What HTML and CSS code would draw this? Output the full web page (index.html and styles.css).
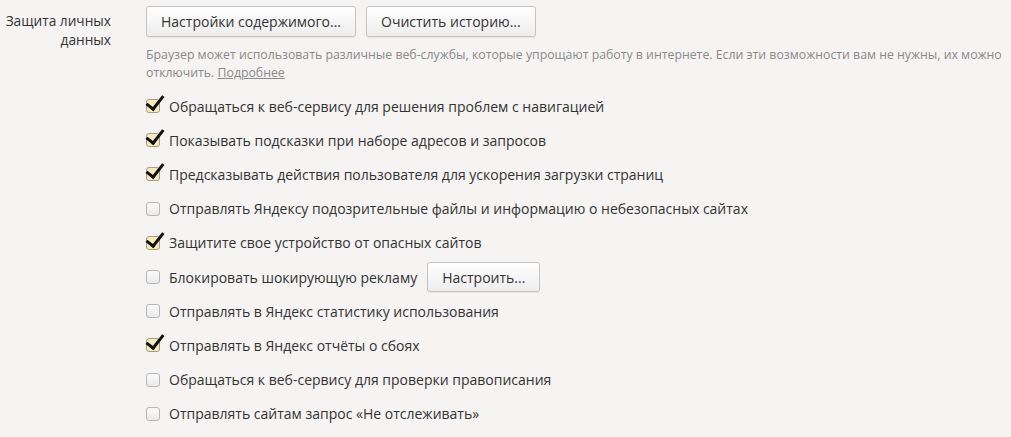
FILE: index.html
```html
<!DOCTYPE html>
<html lang="ru">
<head>
    <meta charset="UTF-8">
    <title>Настройки</title>
    <link rel="stylesheet" href="styles.css">
</head>
<body>
    <div class="section">
        <div class="section-title">Защита личных данных</div>
        <div class="section-body">
            <div class="buttons">
                <button class="btn">Настройки содержимого...</button>
                <button class="btn">Очистить историю...</button>
            </div>
            <p class="note">Браузер может использовать различные веб-службы, которые упрощают работу в интернете. Если эти возможности вам не нужны, их можно отключить. <a href="#">Подробнее</a></p>

            <ul class="options">
                <li><label><input type="checkbox" checked><span class="box"></span>Обращаться к веб-сервису для решения проблем с навигацией</label></li>
                <li><label><input type="checkbox" checked><span class="box"></span>Показывать подсказки при наборе адресов и запросов</label></li>
                <li><label><input type="checkbox" checked><span class="box"></span>Предсказывать действия пользователя для ускорения загрузки страниц</label></li>
                <li><label><input type="checkbox"><span class="box"></span>Отправлять Яндексу подозрительные файлы и информацию о небезопасных сайтах</label></li>
                <li><label><input type="checkbox" checked><span class="box"></span>Защитите свое устройство от опасных сайтов</label></li>
                <li><label><input type="checkbox"><span class="box"></span>Блокировать шокирующую рекламу</label><button class="btn btn-small">Настроить...</button></li>
                <li><label><input type="checkbox"><span class="box"></span>Отправлять в Яндекс статистику использования</label></li>
                <li><label><input type="checkbox" checked><span class="box"></span>Отправлять в Яндекс отчёты о сбоях</label></li>
                <li><label><input type="checkbox"><span class="box"></span>Обращаться к веб-сервису для проверки правописания</label></li>
                <li><label><input type="checkbox"><span class="box"></span>Отправлять сайтам запрос «Не отслеживать»</label></li>
            </ul>
        </div>
    </div>
</body>
</html>
```

FILE: styles.css
```css
body {
    margin: 0;
    background-color: #f5f4f2;
    font-family: "Open Sans", "Noto Sans", sans-serif;
    font-size: 14px;
    color: #333;
}

.section {
    display: flex;
    padding-top: 6px;
}

.section-title {
    width: 111px;
    flex-shrink: 0;
    text-align: right;
    font-size: 13.7px;
    line-height: 19px;
    padding-top: 5px;
    color: #333;
}

.section-body {
    margin-left: 35px;
}

.buttons {
    display: flex;
    gap: 10px;
}

.btn {
    font-family: inherit;
    font-size: 14px;
    color: #333;
    height: 31px;
    padding: 0 14px;
    border: 1px solid #c4c4c4;
    border-radius: 3px;
    background: linear-gradient(#ffffff, #ededed);
    box-shadow: 0 1px 1px rgba(0, 0, 0, 0.06);
}

.note {
    margin: 9px 0 0;
    width: 864px;
    font-size: 12.3px;
    line-height: 18px;
    color: #8a8a8a;
}

.note a {
    color: #8a8a8a;
}

.options {
    list-style: none;
    margin: 7px 0 0;
    padding: 0;
}

.options li {
    display: flex;
    align-items: center;
    height: 34.2px;
}

.options label {
    display: flex;
    align-items: center;
}

.options input {
    display: none;
}

.box {
    position: relative;
    width: 12px;
    height: 12px;
    margin: 0 9px 0 0;
    border: 1px solid #b7b7b7;
    border-radius: 3px;
    background: linear-gradient(#fbfbfb, #eaeaea);
}

input:checked + .box {
    background: #f6ebbd;
    border-color: #a99e7c;
}

input:checked + .box::after {
    content: "";
    position: absolute;
    left: 3px;
    top: -8px;
    width: 7px;
    height: 15px;
    border: solid #111;
    border-width: 0 3px 3px 0;
    transform: rotate(38deg);
}

.btn-small {
    margin-left: 10px;
    height: 30px;
}
```
